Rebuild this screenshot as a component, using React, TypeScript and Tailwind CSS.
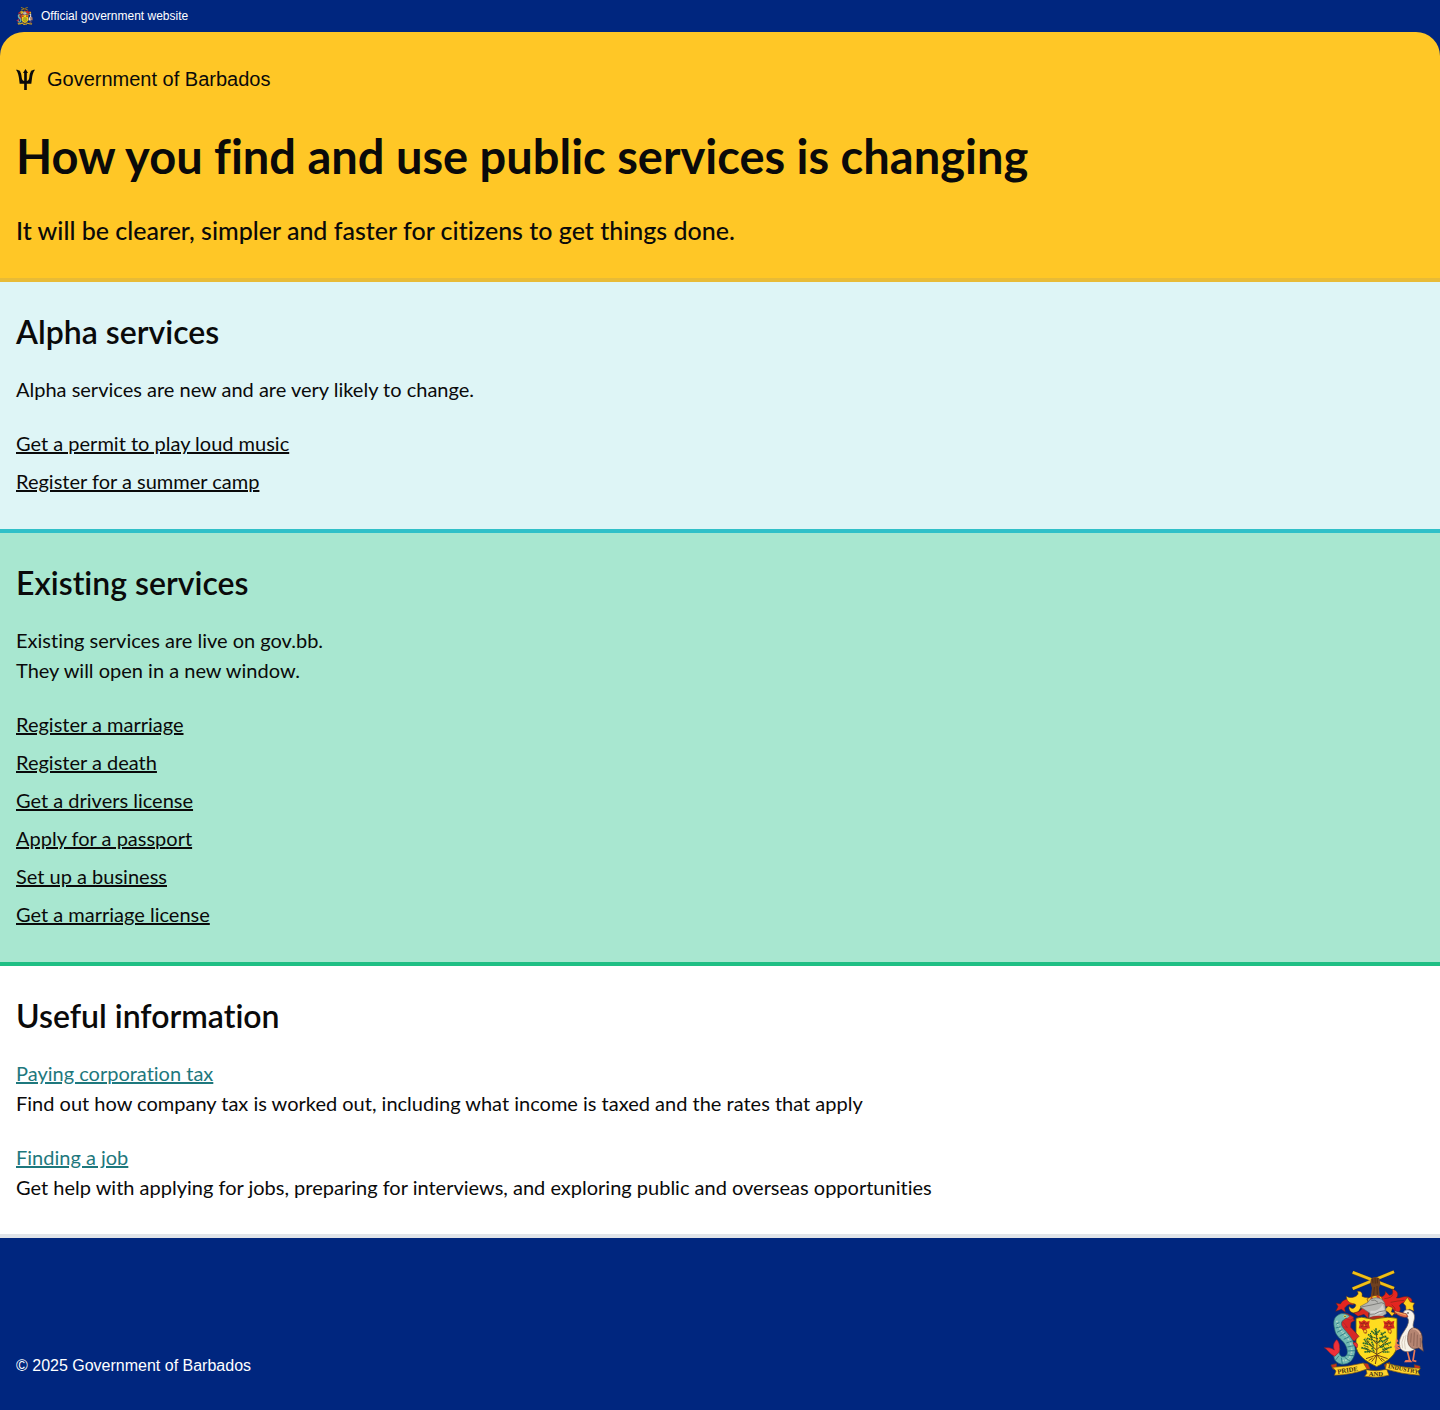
type LinkItem = { label: string; href: string };

const alphaServices: LinkItem[] = [
  { label: "Get a permit to play loud music", href: "#loud-music" },
  { label: "Register for a summer camp", href: "#summer-camp" },
];

const existingServices: LinkItem[] = [
  { label: "Register a marriage", href: "#register-marriage" },
  { label: "Register a death", href: "#register-death" },
  { label: "Get a drivers license", href: "#drivers-license" },
  { label: "Apply for a passport", href: "#passport" },
  { label: "Set up a business", href: "#business" },
  { label: "Get a marriage license", href: "#marriage-license" },
];

const information = [
  {
    label: "Paying corporation tax",
    href: "#corporation-tax",
    text: "Find out how company tax is worked out, including what income is taxed and the rates that apply",
  },
  {
    label: "Finding a job",
    href: "#finding-a-job",
    text: "Get help with applying for jobs, preparing for interviews, and exploring public and overseas opportunities",
  },
];

function Trident({ className }: { className: string }) {
  return (
    <svg viewBox="0 0 57 63" className={className} fill="currentColor" aria-hidden="true">
      <path d="M28.500 0 L36 12 L32.500 12 L32.500 36 C38 35 39 32 40 25 C41 17 42 10 46 7 L42 7 C47 4 52 2 57 2 C51 10 49 19 48 28 C47 36 46 44 46 44 L32.500 44 L32.500 63 L24.500 63 L24.500 44 L11 44 C11 44 10 36 9 28 C8 19 6 10 0 2 C5 2 10 4 15 7 L11 7 C15 10 16 17 17 25 C18 32 19 35 24.500 36 L24.500 12 L21 12 Z" />
    </svg>
  );
}

function Flower({ x }: { x: number }) {
  return (
    <g transform={`translate(${x} 0)`}>
      <path d="M0 164 L8 167 L16 162 L24 167 L33 164 L31 176 L34 187 L24 188 L20 193 L12 193 L9 188 L0 187 L3 176 Z" fill="#d42c1d" />
      <path d="M5 171 L13 174 L16 168 L20 175 L28 171 M7 182 L14 179 L20 181 L27 183" fill="none" stroke="#7d2614" strokeWidth="2" />
      <path d="M14 190 Q15 206 22 199 M22 190 Q27 198 21 204" fill="none" stroke="#a64915" strokeWidth="2.500" />
      <circle cx="17" cy="178" r="2.500" fill="#f3a51b" />
    </g>
  );
}

function CoatOfArms({ className }: { className: string }) {
  return (
    <svg viewBox="12 12 300 324" className={className} role="img" aria-label="Coat of arms of Barbados">
      {/* Crossed canes held by a raised arm */}
      <path d="M98 19 L222 67 M98 68 L222 17" stroke="#6b5316" strokeWidth="10" />
      <path d="M98 19 L222 67 M98 68 L222 17" stroke="#f0bf19" strokeWidth="8" />
      <path d="M153 38 Q163 28 178 37 L181 54 L177 67 L180 93 L152 93 L156 66 L151 51 Z" fill="#6f401f" />
      <path d="M158 38 L159 52 M165 35 L166 53 M172 37 L172 52 M163 63 L161 87 M171 60 L172 86" fill="none" stroke="#3d2212" strokeWidth="2" />
      {/* Mantling */}
      <g stroke="#5a2914" strokeWidth="1.500" strokeLinejoin="round">
        <path d="M103 100 C89 94 69 99 61 114 L48 111 L54 122 L47 136 L64 130 L76 139 L74 126 C83 114 91 112 100 117 Z" fill="#e42520" />
        <path d="M155 99 C143 94 136 96 126 91 C129 80 122 74 111 76 C118 83 112 90 102 93 C93 96 85 95 79 90 C79 105 89 112 101 113 C108 114 110 118 103 125 C97 130 92 126 87 121 C84 139 104 147 115 137 L123 124 L129 135 L149 130 L142 116 Z" fill="#ffd21d" />
        <path d="M147 134 L129 125 L118 136 L101 141 L114 151 L132 145 L145 158 Z" fill="#d92820" />
        <path d="M177 96 C192 91 197 86 196 76 L208 88 C217 87 221 80 216 69 C233 73 238 86 229 96 C239 98 251 89 264 92 C279 96 280 110 267 112 C255 107 244 109 238 119 C246 132 237 144 223 145 C226 132 216 125 205 124 L191 119 L180 110 Z" fill="#e42520" />
        <path d="M250 112 L262 94 L271 108 L284 111 L279 120 L282 136 L269 130 L258 135 L257 120 Z" fill="#ffd21d" />
        <path d="M205 120 L218 125 L214 138 L225 140 L216 151 L205 139 L193 132 Z" fill="#ffc71d" />
        <path d="M193 98 Q216 96 219 85 M212 109 Q235 104 252 103 M215 116 Q229 126 225 136" fill="none" />
      </g>
      {/* Torse and helmet */}
      <path d="M141 99 Q163 82 184 92 L188 102 Q168 95 145 110 Z" fill="#f7c821" stroke="#813112" strokeWidth="2" />
      <path d="M153 94 L160 103 M171 90 L179 99" stroke="#d52a1d" strokeWidth="6" />
      <path d="M144 109 C150 92 187 89 194 112 L199 143 L187 151 C169 154 157 150 147 157 L149 141 L120 122 Z" fill="#b8b8b4" stroke="#686865" strokeWidth="2" />
      <path d="M151 134 Q172 136 181 125 L188 116 L194 136 Q170 152 151 146 Z" fill="#d4d3d1" />
      <path d="M124 123 L159 116 L185 110 L194 114 M149 145 Q165 147 178 137 L196 134 M154 103 Q165 99 174 109" fill="none" stroke="#71716d" strokeWidth="2.500" />
      <path d="M146 155 Q170 146 194 151 L191 160 L151 160 Z" fill="#b62d20" />
      {/* Shield */}
      <path d="M108 157 Q125 150 142 157 Q160 163 177 157 Q202 150 231 157 L231 237 C230 267 201 287 170 302 C139 287 109 268 108 237 Z" fill="#ffdc20" stroke="#6c5710" strokeWidth="2.500" />
      <Flower x={116} />
      <Flower x={190} />
      {/* Fig tree */}
      <g fill="none">
        <path d="M169 199 L171 226 L170 270 M170 253 L140 224 M171 250 L203 223 M170 264 L134 245 M171 265 L205 247 M170 234 L149 211 M171 233 L189 211" stroke="#61451b" strokeWidth="3" />
        <path d="M170 267 L155 287 M170 267 L138 278 M171 267 L166 294 M171 267 L187 287 M171 267 L203 278 M158 276 L146 284 M183 276 L194 285" stroke="#72441a" strokeWidth="3" />
        <path d="M168 187 V204 M154 195 L166 205 L180 193 M144 205 L160 216 M141 217 L158 222 M182 206 L197 198 M178 217 L199 211 M128 231 L151 236 M132 219 L143 233 M124 245 L145 251 M186 229 L206 215 M188 238 L213 229 M187 251 L215 243 M133 258 L154 256 M188 258 L208 258 M155 227 L161 241 M177 227 L187 223 M155 246 L163 257 M180 244 L192 240" stroke="#2c6b2d" strokeWidth="5" strokeDasharray="5 1" />
        <path d="M162 191 L173 207 M151 201 L156 216 M183 199 L189 211 M137 217 L148 228 M195 209 L202 221 M131 238 L146 244 M196 229 L206 238 M138 247 L149 260 M190 241 L201 253 M161 214 L175 219 M176 237 L188 246 M163 224 L178 231 M150 238 L161 247" stroke="#164c27" strokeWidth="3" strokeDasharray="4 1" />
      </g>
      {/* Dolphin */}
      <path d="M56 151 C69 140 88 139 95 155 L104 163 L93 170 L92 184 L117 211 L103 225 L87 217 L88 237 L82 227 L70 205 L72 190 L55 178 L51 165 Z" fill="#d72827" stroke="#751e24" strokeWidth="2" />
      <path d="M44 190 C39 170 41 155 53 148 C65 138 82 144 89 151 L100 153 L91 158 L77 157 L66 166 C58 180 76 191 90 211 C109 237 111 265 94 284 C76 302 49 295 43 278 C38 263 42 249 52 243 L60 249 C53 262 62 275 73 272 C86 268 84 249 74 233 C63 218 47 211 44 190 Z" fill="#71b9b4" stroke="#24656b" strokeWidth="2" />
      <path d="M50 164 Q57 190 76 208 Q99 233 94 262 Q88 287 63 284" fill="none" stroke="#b5d8c4" strokeWidth="5" strokeDasharray="5 3" />
      <path d="M49 174 L58 170 M47 186 L61 182 M51 199 L67 191 M59 211 L77 200 M71 220 L89 211 M79 231 L99 224 M82 243 L103 239 M84 255 L105 254 M81 267 L102 269 M74 274 L91 286 M64 275 L67 294 M57 269 L46 283 M52 260 L41 269" fill="none" stroke="#358289" strokeWidth="3" />
      <path d="M92 148 L102 156 L91 162 L80 158 M68 168 L82 184 L73 182" fill="#e22d30" stroke="#8e2026" strokeWidth="1.500" />
      <circle cx="75" cy="151" r="4" fill="#f4d84c" />
      <circle cx="75" cy="151" r="2" fill="#182c32" />
      <path d="M43 252 C31 243 21 246 13 245 C24 252 30 265 44 271 L57 259 C61 245 59 229 50 221 C41 229 38 239 43 252 Z M99 230 Q118 228 111 246 L104 239 Z" fill="#ef3039" stroke="#8e2026" strokeWidth="2" />
      {/* Pelican */}
      <path d="M225 238 L238 247 L229 251 L225 239 M262 255 L269 283 L257 286 M284 252 L279 284 L289 286" fill="none" stroke="#e97857" strokeWidth="5" />
      <path d="M263 151 C252 152 246 143 252 136 C259 128 275 131 281 142 C289 157 276 172 280 183 C287 197 296 196 298 210 C302 235 289 255 264 257 C243 258 234 243 239 222 C243 202 262 188 265 170 Q267 160 261 153 Z" fill="#f8f3e9" stroke="#76675d" strokeWidth="2" />
      <path d="M223 135 L259 143 L264 152 Q248 158 231 145 Z" fill="#e56b48" stroke="#7e3529" strokeWidth="2" />
      <path d="M225 137 L258 147" stroke="#f6b05f" strokeWidth="3" />
      <circle cx="264" cy="141" r="2.500" fill="#25201c" />
      <path d="M278 186 C297 183 311 203 306 228 L310 256 L296 246 C273 255 261 237 263 214 C264 200 268 188 278 186 Z" fill="#b58572" stroke="#5e4036" strokeWidth="2" />
      <path d="M274 202 L272 230 M283 199 L281 240 M292 206 L291 242 M301 216 L301 243" stroke="#875e50" strokeWidth="2.500" />
      <path d="M278 189 Q291 187 301 205" fill="none" stroke="#ddad96" strokeWidth="4" />
      <path d="M252 210 Q241 229 248 247 M258 207 Q250 230 256 250" fill="none" stroke="#c8bba9" strokeWidth="2" />
      <path d="M228 215 L236 226 L227 230 L242 239 L225 242 Z M257 282 L272 282 L277 289 L252 289 Z" fill="#e97857" />
      {/* Motto ribbon */}
      <g stroke="#78510e" strokeWidth="2" strokeLinejoin="round">
        <path d="M33 297 L49 293 L49 309 L39 310 Z M129 291 L144 294 L150 309 L137 309 Z M193 296 L209 289 L209 305 L198 312 Z M283 296 L300 301 L299 310 L284 307 Z" fill="#ce2e21" />
        <path d="M38 304 Q86 302 130 291 L141 309 Q97 326 43 328 L48 315 Z" fill="#ffd22e" />
        <path d="M138 311 Q170 318 200 310 L207 328 Q171 338 134 331 L141 322 Z" fill="#ffd22e" />
        <path d="M200 291 Q247 306 301 307 L294 317 L299 328 Q245 325 196 309 Z" fill="#ffd22e" />
      </g>
      <g fill="#3e3012" fontFamily="Liberation Serif, serif" fontWeight="bold" fontSize="20">
        <text x="53" y="324" transform="rotate(-9 53 324)">PRIDE</text>
        <text x="146" y="330">AND</text>
        <text x="203" y="306" fontSize="18" transform="rotate(11 203 306)">INDUSTRY</text>
      </g>
    </svg>
  );
}

function SectionTitle({ children }: { children: string }) {
  return <h2 className="text-[32px] leading-[36px] font-semibold">{children}</h2>;
}

function ServiceList({ items }: { items: LinkItem[] }) {
  return (
    <ul className="mt-6 flex flex-col items-start gap-2">
      {items.map((item) => (
        <li key={item.href}>
          <a href={item.href} className="underline decoration-2 underline-offset-1">
            {item.label}
          </a>
        </li>
      ))}
    </ul>
  );
}

export default function App() {
  return (
    <div className="bg-[#00267f] font-['Lato',sans-serif] text-[20px] leading-[30px] text-[#0a0a0a] [font-variant-ligatures:none]">
      <div className="flex h-8 items-center gap-2 px-4 font-['Liberation_Sans',sans-serif] text-xs text-white">
        <CoatOfArms className="h-[18px] w-[17px]" />
        <span>Official government website</span>
      </div>

      <header className="rounded-t-3xl border-b-4 border-[#e8bb36] bg-[#ffc726] px-4 py-8">
        <a href="#home" className="flex w-fit items-center gap-3 font-['Liberation_Sans',sans-serif]">
          <Trident className="h-[21px] w-[19px]" />
          <span>Government of Barbados</span>
        </a>
        <h1 className="mt-8 text-[47px] leading-[60px] font-bold">
          How you find and use public services is changing
        </h1>
        <p className="mt-7 text-[25px] leading-[32px] font-medium">
          It will be clearer, simpler and faster for citizens to get things done.
        </p>
      </header>

      <main>
        <section className="border-b-4 border-[#30c0c8] bg-[#def5f6] px-4 pt-8 pb-[33px]">
          <SectionTitle>Alpha services</SectionTitle>
          <p className="mt-6">Alpha services are new and are very likely to change.</p>
          <ServiceList items={alphaServices} />
        </section>

        <section className="border-b-4 border-[#1fbf84] bg-[#a8e7d0] px-4 pt-8 pb-[33px]">
          <SectionTitle>Existing services</SectionTitle>
          <p className="mt-6">
            Existing services are live on gov.bb.
            <br />
            They will open in a new window.
          </p>
          <ServiceList items={existingServices} />
        </section>

        <section className="border-b-4 border-[#e0e4e9] bg-white px-4 py-8">
          <SectionTitle>Useful information</SectionTitle>
          <div className="mt-6 flex flex-col gap-6">
            {information.map((item) => (
              <div key={item.href}>
                <a href={item.href} className="text-[#1e787d] underline decoration-2 underline-offset-1">
                  {item.label}
                </a>
                <p>{item.text}</p>
              </div>
            ))}
          </div>
        </section>
      </main>

      <footer className="flex items-end justify-between px-4 py-8 font-['Liberation_Sans',sans-serif] text-base text-white">
        <p>© 2025 Government of Barbados</p>
        <CoatOfArms className="h-[108px] w-[100px]" />
      </footer>
    </div>
  );
}
